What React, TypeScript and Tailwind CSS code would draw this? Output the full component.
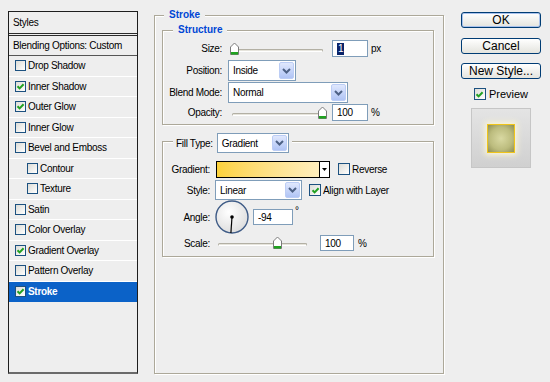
import React from 'react';

type StyleItem = { name: string; checked?: boolean; indent?: boolean; selected?: boolean };

const styleItems: StyleItem[] = [
  { name: 'Drop Shadow' },
  { name: 'Inner Shadow', checked: true },
  { name: 'Outer Glow', checked: true },
  { name: 'Inner Glow' },
  { name: 'Bevel and Emboss' },
  { name: 'Contour', indent: true },
  { name: 'Texture', indent: true },
  { name: 'Satin' },
  { name: 'Color Overlay' },
  { name: 'Gradient Overlay', checked: true },
  { name: 'Pattern Overlay' },
  { name: 'Stroke', checked: true, selected: true },
];

const Check: React.FC<{ checked?: boolean; big?: boolean }> = ({ checked, big }) => (
  <span
    className={`flex shrink-0 items-center justify-center border border-[#1c5180] bg-linear-to-br from-[#dcdcd7] to-white ${
      big ? 'h-[12px] w-[12px]' : 'h-[11px] w-[11px]'
    }`}
  >
    {checked && (
      <svg width="9" height="9" viewBox="0 0 9 9">
        <path d="M1.5 4.2 L3.6 6.4 L7.6 2.2" fill="none" stroke="#21a121" strokeWidth="2" />
      </svg>
    )}
  </span>
);

const Legend: React.FC<{ children: React.ReactNode; left: string }> = ({ children, left }) => (
  <span className={`absolute -top-[8px] bg-[#eeeeee] px-[5px] text-[10px] font-bold leading-[13px] tracking-normal text-[#0046d5] ${left}`}>
    {children}
  </span>
);

const Select: React.FC<{ value: string; w: string; h?: string }> = ({ value, w, h = 'h-[21px]' }) => (
  <div className={`flex items-center border border-[#7f9db9] bg-white pl-[4px] ${w} ${h}`}>
    <span className="flex-1">{value}</span>
    <span className="m-[1px] flex h-[calc(100%-2px)] w-[15px] items-center justify-center rounded-[2px] border border-[#bccdf5] bg-linear-to-b from-[#e0e8fd] to-[#b0c4f5]">
      <svg width="9" height="6" viewBox="0 0 9 6">
        <path d="M1 1 L4.5 4.5 L8 1" fill="none" stroke="#4d6185" strokeWidth="2" />
      </svg>
    </span>
  </div>
);

const Slider: React.FC<{ pos: number; w: string; className?: string }> = ({ pos, w, className = '' }) => (
  <div className={`relative h-[14px] ${w} ${className}`}>
    <div className="absolute left-[3px] right-[3px] top-[7px] h-[3px] rounded-full border border-[#b3b0a4] border-b-white bg-[#e6e4dc]" />
    <svg className="absolute top-0" style={{ left: pos - 4.5 }} width="9" height="13" viewBox="0 0 9 13">
      <path d="M0.5 5 L4.5 1 L8.5 5 V12.5 H0.5 Z" fill="#ffffff" stroke="#7a7a7a" />
      <rect x="1" y="10" width="7" height="2.5" fill="#1fa31f" />
    </svg>
  </div>
);

const Field: React.FC<{ children: React.ReactNode; w: string; h?: string; className?: string }> = ({
  children,
  w,
  h = 'h-[17px]',
  className = '',
}) => (
  <div className={`flex items-center border border-[#7f9db9] bg-white pl-[4px] ${w} ${h} ${className}`}>{children}</div>
);

const AngleDial: React.FC<{ angle: number }> = ({ angle }) => {
  const r = (angle * Math.PI) / 180;
  const x = 17 + Math.cos(r) * 16;
  const y = 17 - Math.sin(r) * 16;
  return (
    <svg width="35" height="35" viewBox="0 0 35 35" className="shrink-0">
      <defs>
        <radialGradient id="dial" cx="40%" cy="35%" r="70%">
          <stop offset="0%" stopColor="#ffffff" />
          <stop offset="100%" stopColor="#dcdcdc" />
        </radialGradient>
      </defs>
      <circle cx="17" cy="17" r="16" fill="url(#dial)" stroke="#3e5b86" strokeWidth="1.4" />
      <line x1="17" y1="17" x2={x} y2={y} stroke="#000" strokeWidth="1.2" />
      <circle cx="17" cy="17" r="1.8" fill="#000" />
    </svg>
  );
};

const groupBox = 'relative border border-[#aca899] shadow-[inset_1px_1px_0_#fff,1px_1px_0_#fff]';

export default function App() {
  return (
    <div className="flex h-[382px] w-[550px] bg-[#eeeeee] font-['Liberation_Sans',Arial,sans-serif] text-[10px] tracking-[-0.3px] text-black">
      {/* styles list */}
      <div className="ml-[8px] mt-[11px] flex h-[363px] w-[130px] flex-col border border-[#1e1e1e] border-b-2 border-b-[#6a6a6a]">
        <div className="flex h-[21px] items-center pl-[4px]">Styles</div>
        <div className="h-[3px] border-y border-[#2a2a2a]" />
        <div className="flex h-[20px] items-center border-b border-[#555] pl-[4px]">Blending Options: Custom</div>
        {styleItems.map((item) => (
          <div
            key={item.name}
            className={`flex h-[20.5px] items-center gap-[2px] border-b ${
              item.selected ? 'border-[#0b62c8] bg-[#0b62c8] font-bold text-white' : 'border-white'
            } ${item.indent ? 'pl-[18px]' : 'pl-[6px]'}`}
          >
            <Check checked={item.checked} />
            <span>{item.name}</span>
          </div>
        ))}
      </div>

      {/* main panel */}
      <div className={`${groupBox} ml-[16px] mt-[15px] h-[359px] w-[290px] pl-[7px] pt-[14px]`}>
        <Legend left="left-[9px]">Stroke</Legend>

        <div className={`${groupBox} h-[95px] w-[272px] pt-[9px]`}>
          <Legend left="left-[10px]">Structure</Legend>
          <div className="flex h-[17px] items-center">
            <span className="w-[59px] text-right">Size:</span>
            <Slider pos={5} w="w-[97px]" className="ml-[7px]" />
            <Field w="w-[36px]" className="ml-[6px]">
              <span className="bg-[#0a246a] px-[1px] leading-[12px] text-white">1</span>
            </Field>
            <span className="ml-[3px]">px</span>
          </div>
          <div className="mt-[3px] flex h-[21px] items-center">
            <span className="w-[59px] text-right">Position:</span>
            <div className="ml-[6px]">
              <Select value="Inside" w="w-[68px]" />
            </div>
          </div>
          <div className="mt-[1px] flex h-[21px] items-center">
            <span className="w-[59px] text-right">Blend Mode:</span>
            <div className="ml-[6px]">
              <Select value="Normal" w="w-[120px]" />
            </div>
          </div>
          <div className="mt-[1px] flex h-[17px] items-center">
            <span className="w-[59px] text-right">Opacity:</span>
            <Slider pos={93} w="w-[97px]" className="ml-[7px]" />
            <Field w="w-[36px]" className="ml-[6px]">
              100
            </Field>
            <span className="ml-[3px]">%</span>
          </div>
        </div>

        <div className={`${groupBox} mt-[16px] h-[116px] w-[272px] pt-[18px]`}>
          <div className="absolute -top-[9px] left-[10px] flex items-center gap-[4px] bg-[#eeeeee] px-[3px]">
            <span>Fill Type:</span>
            <Select value="Gradient" w="w-[72px]" h="h-[20px]" />
          </div>
          <div className="flex h-[18px] items-center">
            <span className="w-[47px] text-right">Gradient:</span>
            <div className="ml-[6px] flex h-[17px] w-[114px] border border-black">
              <div className="flex-1 bg-linear-to-r from-[#fdd23a] to-[#ffeebd]" />
              <div className="flex w-[10px] items-center justify-center border-l border-black bg-white">
                <svg width="5" height="3" viewBox="0 0 5 3">
                  <path d="M0 0 H5 L2.5 3 Z" fill="#000" />
                </svg>
              </div>
            </div>
            <span className="ml-[8px]">
              <Check big />
            </span>
            <span className="ml-[2px]">Reverse</span>
          </div>
          <div className="mt-[2px] flex h-[20px] items-center">
            <span className="w-[47px] text-right">Style:</span>
            <div className="ml-[5px]">
              <Select value="Linear" w="w-[87px]" h="h-[20px]" />
            </div>
            <span className="ml-[7px]">
              <Check checked big />
            </span>
            <span className="ml-[2px]">Align with Layer</span>
          </div>
          <div className="flex h-[34px] items-center">
            <span className="w-[47px] text-right">Angle:</span>
            <div className="ml-[5px]">
              <AngleDial angle={-94} />
            </div>
            <Field w="w-[40px]" h="h-[16px]" className="ml-[3px]">
              -94
            </Field>
            <span className="ml-[2px] self-start pt-[3px]">°</span>
          </div>
          <div className="mt-[1px] flex h-[16px] items-center">
            <span className="w-[47px] text-right">Scale:</span>
            <Slider pos={62} w="w-[95px]" className="ml-[5px]" />
            <Field w="w-[34px]" h="h-[16px]" className="ml-[10px]">
              100
            </Field>
            <span className="ml-[4px]">%</span>
          </div>
        </div>
      </div>

      {/* buttons + preview */}
      <div className="ml-[17px] mt-[12px] flex w-[80px] flex-col items-center">
        <button className="flex h-[16px] w-[80px] items-center justify-center rounded-[3px] border border-[#003c74] bg-linear-to-b from-white to-[#e4e4de] text-[12px] tracking-normal shadow-[inset_0_0_0_1px_#a9c2ec]">
          OK
        </button>
        <button className="mt-[10px] flex h-[16px] w-[80px] items-center justify-center rounded-[3px] border border-[#003c74] bg-linear-to-b from-white to-[#e4e4de] text-[12px] tracking-normal">
          Cancel
        </button>
        <button className="mt-[9px] flex h-[16px] w-[80px] items-center justify-center rounded-[3px] border border-[#003c74] bg-linear-to-b from-white to-[#e4e4de] text-[12px] tracking-normal">
          New Style...
        </button>
        <div className="mt-[9px] flex h-[12px] items-center gap-[3px] text-[11px] tracking-normal">
          <Check checked big />
          <span>Preview</span>
        </div>
        <div className="mt-[8px] flex h-[60px] w-[60px] items-center justify-center border border-[#c6c6c6] bg-linear-to-b from-[#e4e4e4] to-[#d0d0d0]">
          <div className="h-[29px] w-[28px] border border-[#f0c419] bg-[radial-gradient(circle,#d9d9a2_0%,#bcbc7e_60%,#8e8e55_100%)] shadow-[0_0_6px_2px_#fbf6d6]" />
        </div>
      </div>
    </div>
  );
}
